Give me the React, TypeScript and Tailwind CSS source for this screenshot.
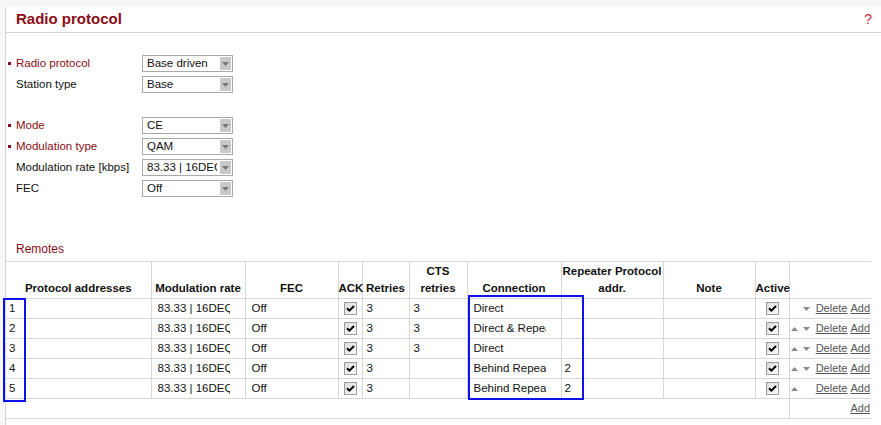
import React from 'react';

const RED = 'text-[#8b0c16]';

type Field = { label: string; value: string; required?: boolean };

const group1: Field[] = [
  { label: 'Radio protocol', value: 'Base driven', required: true },
  { label: 'Station type', value: 'Base' },
];

const group2: Field[] = [
  { label: 'Mode', value: 'CE', required: true },
  { label: 'Modulation type', value: 'QAM', required: true },
  { label: 'Modulation rate [kbps]', value: '83.33 | 16DEQAM' },
  { label: 'FEC', value: 'Off' },
];

type Remote = {
  addr: string;
  cts: string;
  connection: string;
  repeater: string;
  up: boolean;
  down: boolean;
};

const remotes: Remote[] = [
  { addr: '1', cts: '3', connection: 'Direct', repeater: '', up: false, down: true },
  { addr: '2', cts: '3', connection: 'Direct & Repeater', repeater: '', up: true, down: true },
  { addr: '3', cts: '3', connection: 'Direct', repeater: '', up: true, down: true },
  { addr: '4', cts: '', connection: 'Behind Repeater', repeater: '2', up: true, down: true },
  { addr: '5', cts: '', connection: 'Behind Repeater', repeater: '2', up: true, down: false },
];

const Select = ({ value }: { value: string }) => (
  <div className="relative flex h-[17px] w-[91px] items-center border border-[#a9a9a9] bg-white">
    <span className="w-[74px] overflow-hidden whitespace-nowrap pl-[4px] leading-[15px]">{value}</span>
    <span className="absolute right-[1px] top-[1px] flex h-[13px] w-[11px] items-center justify-center bg-[#c9c9c9]">
      <svg width="7" height="4" viewBox="0 0 7 4">
        <path d="M0 0h7L3.5 4z" fill="#7a7a7a" />
      </svg>
    </span>
  </div>
);

const FormRow = ({ label, value, required }: Field) => (
  <div className="flex h-[17px] items-center">
    <div className="flex w-[10px] items-center pl-[2px]">
      {required && <span className="h-[3px] w-[3px] bg-[#8b0c16]" />}
    </div>
    <div className={`w-[126px] whitespace-nowrap ${required ? RED : 'text-[#111]'}`}>{label}</div>
    <Select value={value} />
  </div>
);

const Check = () => (
  <span className="inline-flex h-[13px] w-[13px] items-center justify-center border border-[#9c9c9c] bg-gradient-to-br from-[#dcdcdc] to-[#fbfbfb] align-middle">
    <svg width="9" height="9" viewBox="0 0 9 9">
      <path d="M1 4.2L3.4 6.6L8 2" stroke="#000" strokeWidth="2" fill="none" />
    </svg>
  </span>
);

const Up = () => (
  <svg width="7" height="4" viewBox="0 0 7 4" className="inline-block">
    <path d="M0 4h7L3.5 0z" fill="#8a8a8a" />
  </svg>
);

const Down = () => (
  <svg width="7" height="4" viewBox="0 0 7 4" className="inline-block">
    <path d="M0 0h7L3.5 4z" fill="#8a8a8a" />
  </svg>
);

const th = 'border border-[#d6d6d6] align-bottom text-center font-bold leading-[17px] pb-[1px] px-0';
const td = 'border border-[#d6d6d6] px-0 leading-[19px] whitespace-nowrap';

const App = () => {
  return (
    <div className="relative h-[425px] w-[881px] overflow-hidden bg-[#f7f7f7] font-['Liberation_Sans',Arial,sans-serif] text-[11.5px] text-[#111]">
      <div className="h-[7px]" />
      <div className="flex h-[418px] pl-[5px]">
        <div className="flex-1 border-l border-[#d6d6d6] bg-white">
          {/* Panel header */}
          <div className="flex h-[26px] items-center justify-between border-b border-[#d2d2d2] pl-[10px] pr-[9px]">
            <h1 className={`text-[15px] font-bold ${RED}`}>Radio protocol</h1>
            <span className="text-[14px] text-[#c8303c]">?</span>
          </div>

          {/* Settings form */}
          <div className="mt-[22px] flex flex-col gap-[4px]">
            {group1.map((f) => (
              <FormRow key={f.label} {...f} />
            ))}
          </div>
          <div className="mt-[24px] flex flex-col gap-[4px]">
            {group2.map((f) => (
              <FormRow key={f.label} {...f} />
            ))}
          </div>

          <div className={`mt-[44px] h-[17px] pl-[10px] text-[12px] leading-[17px] ${RED}`}>Remotes</div>

          {/* Remotes table */}
          <table className="mt-[3px] w-[865px] table-fixed border-collapse">
            <colgroup>
              <col className="w-[145px]" />
              <col className="w-[94px]" />
              <col className="w-[93px]" />
              <col className="w-[24px]" />
              <col className="w-[47px]" />
              <col className="w-[58px]" />
              <col className="w-[94px]" />
              <col className="w-[102px]" />
              <col className="w-[92px]" />
              <col className="w-[34px]" />
              <col className="w-[82px]" />
            </colgroup>
            <thead>
              <tr className="h-[37px]">
                <th className={`${th} border-l-0`}>Protocol addresses</th>
                <th className={th}>Modulation rate</th>
                <th className={th}>FEC</th>
                <th className={`${th} whitespace-nowrap`}>ACK</th>
                <th className={th}>Retries</th>
                <th className={th}>
                  CTS
                  <br />
                  retries
                </th>
                <th className={th}>Connection</th>
                <th className={`${th} whitespace-nowrap`}>
                  Repeater Protocol
                  <br />
                  addr.
                </th>
                <th className={th}>Note</th>
                <th className={th}>Active</th>
                <th className={`${th} border-r-0`} />
              </tr>
            </thead>
            <tbody>
              {remotes.map((r) => (
                <tr key={r.addr} className="h-[20px]">
                  <td className={`${td} border-l-0 pl-[3px]`}>{r.addr}</td>
                  <td className={`${td} pl-[6px]`}>
                    <div className="w-[72px] overflow-hidden">83.33 | 16DEQAM</div>
                  </td>
                  <td className={`${td} pl-[6px]`}>Off</td>
                  <td className={`${td} text-center`}>
                    <Check />
                  </td>
                  <td className={`${td} pl-[4px]`}>3</td>
                  <td className={`${td} pl-[4px]`}>{r.cts}</td>
                  <td className={`${td} pl-[6px]`}>
                    <div className="w-[72px] overflow-hidden">{r.connection}</div>
                  </td>
                  <td className={`${td} pl-[3px]`}>{r.repeater}</td>
                  <td className={td} />
                  <td className={`${td} text-center`}>
                    <Check />
                  </td>
                  <td className={`${td} border-r-0`}>
                    <div className="flex items-center justify-end pr-[1px] text-[11px]">
                      <span className="flex w-[7px] justify-center">{r.up && <Up />}</span>
                      <span className="ml-[5px] flex w-[7px] justify-center">{r.down && <Down />}</span>
                      <a href="#" className="ml-[6px] text-[#555] underline">
                        Delete
                      </a>
                      <a href="#" className="ml-[3px] text-[#555] underline">
                        Add
                      </a>
                    </div>
                  </td>
                </tr>
              ))}
              <tr className="h-[20px]">
                <td colSpan={10} className={`${td} border-l-0`} />
                <td className={`${td} border-r-0 pr-[1px] text-right text-[11px]`}>
                  <a href="#" className="text-[#555] underline">
                    Add
                  </a>
                </td>
              </tr>
            </tbody>
          </table>
        </div>
      </div>

      {/* Highlight boxes */}
      <div className="pointer-events-none absolute left-[3px] top-[298px] h-[104px] w-[23px] border-2 border-[#0c12e8]" />
      <div className="pointer-events-none absolute left-[468px] top-[295px] h-[105px] w-[116px] border-2 border-[#0c12e8]" />
    </div>
  );
};

export default App;
